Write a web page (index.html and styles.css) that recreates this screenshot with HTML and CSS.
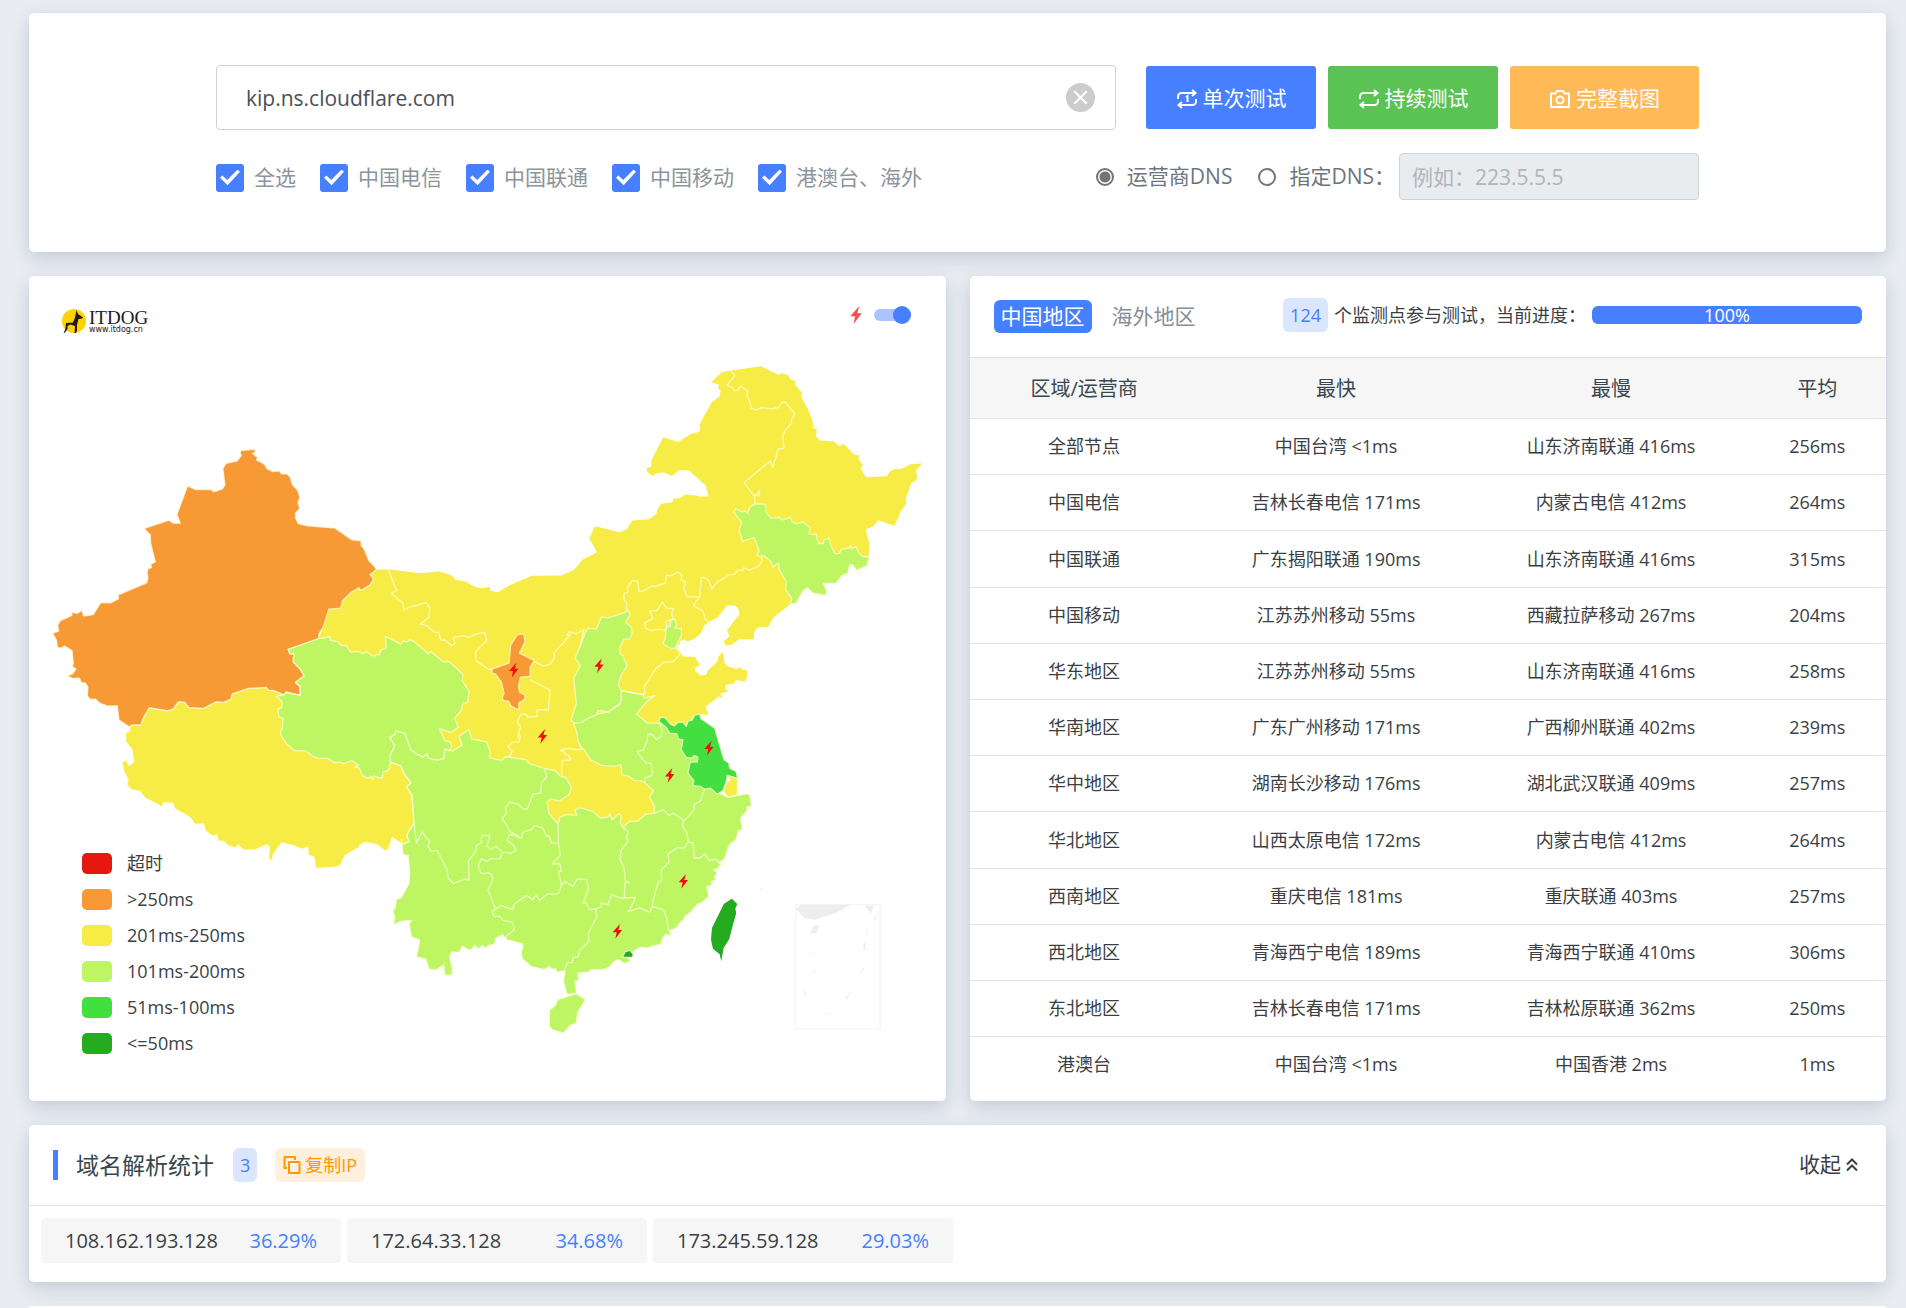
FILE: index.html
```html
<!DOCTYPE html>
<html lang="zh-CN">
<head>
<meta charset="utf-8">
<title>ITDOG</title>
<link rel="stylesheet" href="styles.css">
</head>
<body>
<svg class="defs" aria-hidden="true">
  <symbol id="bolt" viewBox="-14 -22 28 44"><path d="M8,-22 L-14,3 L-2,3 L-6,22 L14,-4 L3,-4 Z"/></symbol>
  <symbol id="repeat" viewBox="0 0 22 20"><path d="M2 10V7.500a3.500 3.500 0 0 1 3.500-3.500H19M16 1l3.500 3L16 7M20 10v2.500a3.500 3.500 0 0 1-3.500 3.500H3M6 13l-3.500 3L6 19"/></symbol>
</svg>

<section class="card query">
  <form class="query-form">
    <div class="row main-row">
      <div class="host">
        <input class="host-input" type="text" value="kip.ns.cloudflare.com" aria-label="域名">
        <button class="clear" type="button" aria-label="清除">
          <svg viewBox="0 0 28 28"><circle cx="14" cy="14" r="14" fill="#ccc"/><path d="M8 8l12 12M20 8L8 20" stroke="#fff" stroke-width="2" fill="none"/></svg>
        </button>
      </div>
      <div class="actions">
        <button class="btn blue" type="button"><svg class="ico" viewBox="0 0 22 20"><use href="#repeat"/><path d="M10 8l1.500-1v6"/></svg>单次测试</button>
        <button class="btn green" type="button"><svg class="ico" viewBox="0 0 22 20"><use href="#repeat"/></svg>持续测试</button>
        <button class="btn orange" type="button"><svg class="ico" viewBox="0 0 22 20"><path d="M2 4.500h4.500L8 2h6l1.500 2.500H20V18H2z"/><circle cx="11" cy="11" r="3.500"/></svg>完整截图</button>
      </div>
    </div>
    <div class="row option-row">
      <div class="checks">
        <label><input type="checkbox" checked>全选</label>
        <label><input type="checkbox" checked>中国电信</label>
        <label><input type="checkbox" checked>中国联通</label>
        <label><input type="checkbox" checked>中国移动</label>
        <label><input type="checkbox" checked>港澳台、海外</label>
      </div>
      <div class="dns">
        <label><input type="radio" name="dns" checked>运营商DNS</label>
        <label><input type="radio" name="dns">指定DNS：</label>
        <input class="dns-input" type="text" placeholder="例如：223.5.5.5" aria-label="DNS" disabled>
      </div>
    </div>
  </form>
</section>

<div class="columns">
  <section class="card map-card">
    <svg class="map" viewBox="87 828 2751 2475" role="img" aria-label="中国地图">
      <g class="areas">
        <g transform="translate(1200,1020)">
          <path class="y" d="M-71,690 -35,688 60,700 118,695 155,706 167,720 197,725 225,741 246,745 271,741 272,753 295,757 328,737 396,708 485,707 523,690 549,659 592,637 569,597 583,563 590,560 660,578 700,600 700,1400 100,1260 60,1150 -250,1000 -243,896 -230,862 -213,808 -178,805 -172,783 -149,760 -122,743 -118,752 -89,735 -79,718 -89,704Z"/>
        </g>
        <g transform="translate(1920,1020)">
          <path class="y" d="M-124,562 -60,578 -37,566 -22,542 28,538 49,523 54,507 64,492 98,487 102,476 118,475 139,464 162,467 165,465 180,470 207,470 198,437 148,392 119,390 97,408 74,398 50,400 38,408 22,395 21,384 35,380 35,361 71,292 116,306 150,284 180,275 183,262 178,258 191,232 217,186 240,170 243,152 235,145 238,133 228,131 214,128 246,97 274,92 365,79 418,105 427,99 446,106 452,117 468,124 467,134 480,150 487,158 484,170 504,205 518,240 522,265 532,267 529,288 541,302 583,304 598,318 613,312 645,345 661,346 656,356 670,376 663,386 679,411 743,409 748,397 765,387 785,387 812,373 848,371 829,392 834,412 829,422 815,430 799,475 801,490 783,516 778,530 765,558 716,541 703,558 679,570 690,615 687,650 600,650 452,793 402,832 386,861 354,862 343,877 343,898 298,899 277,915 258,917 252,905 270,889 262,871 299,824 296,805 285,797 262,797 235,832 207,847 193,858 186,878 165,897 145,904 125,899 118,915 110,920 131,950 165,951 181,975 167,985 167,993 182,1007 199,1006 204,992 233,967 236,951 250,935 254,968 265,980 291,988 302,982 306,990 323,991 321,1016 315,1025 288,1021 284,1031 258,1036 257,1048 266,1055 242,1061 250,1078 238,1070 198,1101 207,1126 180,1123 163,1130 136,1160 60,1160 -124,1160Z"/>
          <path class="g s" d="M283,517 289,506 308,517 314,513 325,520 330,503 346,492 377,493 380,518 395,535 420,533 426,540 452,533 457,545 470,552 490,547 511,562 509,583 530,584 536,611 551,611 554,600 568,594 574,618 587,642 600,640 605,629 630,624 632,617 636,626 650,620 655,635 670,651 690,650 682,678 650,692 660,698 658,705 640,675 630,675 625,701 608,706 590,730 552,731 562,755 557,767 518,759 504,744 491,752 470,790 453,793 456,775 438,750 440,725 418,688 418,671 411,672 400,683 392,662 372,648 352,648 359,632 343,593 309,604 299,570 306,547Z"/>
        </g>
        <g transform="translate(300,2040)">
          <path class="y s" d="M89,142 95,136 124,135 128,118 148,84 203,93 220,87 236,66 255,68 266,83 311,86 348,66 371,68 393,58 397,42 445,26 499,23 506,31 524,33 553,45 600,100 870,247 903,258 915,284 934,310 921,322 937,347 943,432 930,450 921,468 929,486 908,494 902,490 878,473 866,508 856,515 833,495 797,488 780,496 778,503 736,527 721,557 710,562 648,566 643,532 626,526 624,503 604,508 583,498 546,490 535,503 520,524 516,544 507,538 509,501 501,495 467,510 432,511 414,495 409,505 392,499 388,501 372,485 354,484 352,466 338,469 317,454 311,432 285,434 271,413 224,387 220,371 191,369 185,384 178,376 136,355 121,336 92,328 81,315 84,298 72,276 66,248 79,240 87,258 102,246 96,209 77,184 78,158 89,155Z"/>
        </g>
        <path class="o s" transform="translate(90,840)" d="M632,512 675,508 677,516 668,521 683,532 680,540 704,553 711,566 729,575 748,573 755,582 771,582 781,592 788,615 804,632 810,653 804,668 810,686 797,699 797,714 805,731 833,738 916,745 966,780 994,783 994,797 1002,806 1017,842 1036,862 1039,870 1021,884 1031,898 1021,915 992,932 988,923 961,940 938,963 932,985 897,988 880,1042 867,1063 867,1078 775,1109 781,1123 792,1121 790,1146 811,1168 823,1188 797,1208 811,1221 811,1247 769,1236 763,1245 734,1233 716,1231 709,1223 655,1226 607,1242 603,1258 581,1268 558,1266 521,1286 476,1283 465,1268 446,1266 430,1287 413,1293 358,1284 338,1318 334,1335 305,1336 299,1342 267,1321 262,1278 233,1279 209,1270 196,1258 182,1259 172,1249 174,1222 166,1210 153,1208 149,1195 127,1196 111,1187 127,1183 138,1168 127,1160 130,1152 126,1112 104,1099 92,1105 82,1103 80,1083 68,1060 86,1054 83,1036 90,1023 126,1007 125,997 142,1001 155,991 161,1009 190,1004 212,969 242,969 265,957 265,945 350,909 354,895 351,877 355,866 365,863 362,853 376,846 362,790 361,765 342,746 417,721 430,730 451,730 441,704 473,618 497,629 544,629 551,636 577,627 585,615 579,566 589,550 622,543 634,527 631,520Z"/>
        <path class="g s" transform="translate(300,2040)" d="M565,-91 657,-124 691,-129 691,-118 715,-114 723,-103 740,-103 752,-83 774,-85 788,-79 800,-84 822,-69 830,-76 840,-75 842,-88 859,-96 857,-130 903,-107 911,-117 921,-113 931,-120 944,-114 985,-78 993,-85 1030,-54 1048,-54 1065,-40 1090,-15 1087,2 1108,35 1103,68 1088,72 1086,90 1065,115 1076,143 1053,158 1018,146 1036,183 1052,187 1055,204 1047,213 1035,208 1033,236 1012,242 985,235 981,222 971,233 950,222 933,210 915,161 889,154 885,166 870,172 885,198 870,230 872,247 866,273 849,277 848,294 835,294 822,288 818,300 813,290 804,295 788,288 778,264 764,262 776,256 755,242 733,252 720,247 705,249 684,236 655,235 638,229 617,213 585,213 560,192 541,163 548,145 549,115 538,113 534,88 546,83 546,65 530,50 553,45 557,38 601,47 601,20 587,8 613,-12 601,-32 580,-54 582,-79 571,-77Z"/>
        <g transform="translate(1380,2040)">
          <path class="g s" d="M-210,230 -195,198 -210,172 -195,166 -191,154 -165,161 -147,210 -130,222 -109,233 -99,222 -95,235 -68,242 -47,236 -45,208 -33,213 -20,213 7,196 -2,170 27,149 36,178 80,186 90,212 90,235 125,242 140,230 160,234 200,240 210,252 253,266 288,273 302,290 370,300 367,208 355,185 352,160 342,130 360,128 400,105 445,97 480,75 484,33 551,45 553,56 585,48 565,62 553,75 530,103 563,130 598,130 660,165 740,240 780,340 805,352 866,342 872,350 875,380 862,381 862,393 843,415 848,450 836,453 830,480 813,491 805,505 795,538 779,548 788,557 777,560 779,566 761,570 773,580 765,592 770,602 756,605 755,619 741,620 748,650 728,668 712,675 693,698 676,710 673,718 660,731 650,745 632,752 636,769 618,764 608,778 603,794 576,800 565,805 540,803 521,816 505,836 515,842 495,852 475,840 460,848 450,862 430,870 393,870 388,877 355,880 357,903 346,905 350,940 322,945 311,905 316,880 314,873 291,878 292,905 289,868 276,868 268,861 255,870 215,861 203,850 188,838 184,820 190,798 187,792 140,780 128,765 108,776 104,793 84,798 77,808 69,797 55,808 45,797 32,813 8,800 -2,818 -24,817 -31,832 -22,865 -23,887 -45,887 -48,856 -72,871 -93,869 -102,838 -130,832 -120,781 -145,772 -152,733 -145,722 -175,725 -200,735 -195,715 -201,692 -194,685 -190,658 -177,655 -165,635 -152,610 -150,580 -155,527 -170,525 -175,480 -172,494 -151,486 -159,468 -150,450 -137,432 -143,347 -159,322 -146,310 -165,284 -177,258 -208,247Z"/>
          <path class="y s" d="M302,213 320,206 360,210 370,206 393,240 425,257 465,260 484,254 487,285 508,290 525,302 545,303 556,310 581,332 570,352 585,380 583,401 558,404 535,424 510,425 490,443 482,430 484,408 477,402 457,420 450,402 447,412 421,415 400,395 360,384 345,392 352,407 318,405 300,413 295,433 267,400 262,366 275,358 298,364 328,345 335,322 318,293 306,290 306,243 333,240 330,230 315,222 312,213Z"/>
          <path class="dg s" d="M598,125 601,114 615,113 633,134 644,138 655,128 670,127 680,140 685,124 697,121 705,106 720,103 724,117 765,145 793,240 808,250 810,265 830,276 834,297 803,287 800,305 790,333 772,343 752,325 735,328 722,320 700,318 703,303 685,280 692,247 713,247 715,232 703,227 697,235 680,233 665,210 670,180 657,178 651,162 630,160 620,143Z"/>
          <path class="y s" d="M803,287 834,297 833,346 805,352 792,335 800,310 812,300Z"/>
          <path class="g s" d="M350,942 377,960 354,998 350,1030 330,1038 312,1061 276,1050 269,1040 269,992 287,977 294,960Z"/>
          <path class="vg" d="M817,657 833,673 827,687 830,700 820,735 809,778 792,805 785,845 780,824 760,807 754,780 757,745 793,672Z"/>
          <path class="vg s" d="M489,833 496,817 511,812 521,825 518,833Z"/>
        </g>
        <g transform="translate(1200,1020)">
          <path class="g s" d="M526,1150 514,1143 530,1090 522,1015 542,977 526,955 541,920 557,878 565,865 590,868 605,832 625,834 655,825 680,816 680,806 692,823 678,847 695,862 697,880 691,897 672,899 660,925 660,940 670,948 682,978 665,1005 655,1035 665,1050 663,1090 625,1116 595,1112 590,1125 570,1133 545,1148Z"/>
          <path class="g s" d="M800,860 812,860 813,842 826,837 831,855 826,865 845,866 845,888 826,925 813,926 790,912 797,897Z"/>
          <path class="o s" d="M353,885 371,882 376,905 359,940 403,962 391,983 391,1010 362,1012 356,1040 360,1058 375,1065 376,1078 357,1090 357,1110 335,1100 326,1084 310,1082 308,1072 313,1060 305,1027 288,1003 277,1000 277,988 328,970 333,915Z"/>
        </g>
      </g>
      <g class="borders">
        <path transform="translate(1200,1020)" d="M-35,688 -10,752 -25,761 10,790 12,810 35,800 50,797 80,788 90,805 88,832 62,853 82,857 104,877 117,878 123,900 139,902 155,918 166,910 160,893 187,888 210,893 225,883 255,878 261,902 228,935 228,962 265,988 277,988M403,965 432,979 451,973 464,955 464,938 512,885 500,886 510,876 530,882 553,868 541,920M391,1020 451,1051 446,1110 412,1110 412,1130 385,1132 378,1122 362,1125 352,1148 362,1160 355,1195M680,806 682,790 673,780 673,762 685,757 683,743 698,722 714,724 718,754 730,754 757,738 765,740 797,730 800,707 815,707 835,696 847,707 845,720 858,727 852,747 863,771 897,771M735,850 760,835 750,814 772,812 788,787 800,805 822,806 816,820 820,837 797,847 802,860 797,872 778,868 755,873 738,865ZM662,1052 725,1064 736,1060 733,1042 770,985 795,967 820,966 842,943 830,925"/>
        <path transform="translate(1920,1020)" d="M180,771 185,715 190,712 206,720 217,747 232,727 270,705 285,703 295,690 310,692 312,684 330,690 355,680 365,668 367,652M180,771 161,797 190,814 197,838 207,847M274,92 286,107 262,136 278,142 285,152 295,151 303,138 325,153 322,163 336,205 352,210 365,203 397,207 418,202 427,187 437,187 466,222 456,238 456,250 436,272 430,290 433,325 415,328 400,383 392,363 314,428 341,465 360,468 360,452 345,470 346,492"/>
        <path transform="translate(1380,2040)" d="M175,160 182,170 178,187 157,187 145,200 157,215 150,230 132,233M598,130 607,150 605,170 590,180 580,165 565,162 562,185 550,212 532,215 548,238 560,250 575,250 577,287 556,295 556,310M735,328 722,365 704,373 703,392 672,424 663,414 640,400 628,408 612,390 583,401M672,424 668,437 682,460 686,487 700,490 705,535 722,535 735,523 748,543 768,538 785,555M686,487 672,506 655,503 625,522 628,548 605,570 606,600 595,610 580,662 577,685 571,698M490,443 505,455 500,475 506,483 484,512 481,540 492,560 498,605 510,608 496,609 494,655M410,688 424,682 425,670 445,675 455,645 480,655 494,655 528,653 512,687 505,696 540,685 571,698 577,680 610,690 622,715 625,745 632,765M410,688 408,700 412,710 385,763 388,785 360,812 355,832 340,833 338,848 322,850 314,873M410,688 390,690 378,668 370,672 387,625 380,600 352,598 340,620 315,605 305,618M295,433 296,490 302,527 277,553 300,552 305,575 297,575 305,618 297,640 285,645 265,642 240,662 228,647 220,660 200,648 164,673 158,690 125,677 97,695 107,688 85,632 100,595 90,580 65,582 55,560 65,537 80,545 95,537 122,537 127,518 155,520 170,512 160,495 142,482 150,463 185,475 190,457 215,450 225,437 250,445 260,470 268,468 275,490 290,490M253,266 262,290 245,310 243,340 220,343 203,388 190,388 175,373 150,367 137,385 140,400 127,417 140,435 150,455 178,470M-137,432 -130,490 -113,457 -90,487 -95,500 -85,515 -68,512 -37,573 -35,595 -18,612 15,598 28,602 26,543 48,515 50,498 64,490 66,467 90,468 82,500 92,508 110,500 127,518M97,695 102,710 120,710 130,722 160,728 163,750 140,770 138,780"/>
      </g>
      <g transform="translate(1380,2040)" fill="#eee">
        <path d="M1008,675H1262V1047H1008Z" fill="none" stroke="#f5f5f5" stroke-width="4"/>
        <path d="M1008,688 1025,675 1172,675 1130,700 1067,720 1035,716ZM1216,678H1242L1234,702ZM1060,740 1080,736 1070,760 1052,762ZM1257,695 1242,722 1247,722ZM1233,738 1216,764 1220,764ZM1212,790H1218V812H1212ZM1217,857 1202,878 1210,876ZM1054,802 1064,830 1060,828ZM1075,866 1055,888 1068,870ZM1030,934 1037,936 1042,956ZM1182,924 1157,958 1163,958ZM1095,1007 1128,995 1115,1002ZM900,630 910,622 908,630Z"/>
      </g>
      <g class="bolts">
        <use href="#bolt" x="1528" y="1989" width="28" height="44"/>
        <use href="#bolt" x="1784" y="1976" width="28" height="44"/>
        <use href="#bolt" x="1614" y="2188" width="28" height="44"/>
        <use href="#bolt" x="2114" y="2223" width="28" height="44"/>
        <use href="#bolt" x="1996" y="2305" width="28" height="44"/>
        <use href="#bolt" x="2037" y="2623" width="28" height="44"/>
        <use href="#bolt" x="1839" y="2773" width="28" height="44"/>
      </g>
    </svg>
    <div class="logo">
      <svg viewBox="0 0 24 25"><circle cx="12" cy="12" r="12" fill="#fcd305"/><path d="M14.500 1l1.500 4 5 3.500-1 1-3.500 0.500-1 4-0.500 2 0 5.500-1 2.500h-1.500l0.500-7-4.500-1.500-3 1.500 0 3-2.500 3.500-1.500 1 2-5 0.500-5.500 7-0.500 2-5z" fill="#231815"/></svg>
      <div class="logo-text"><span class="logo-name">ITDOG</span><span class="logo-url">www.itdog.cn</span></div>
    </div>
    <label class="quick"><svg viewBox="-14 -22 28 44"><use href="#bolt" x="-14" y="-22" width="28" height="44"/></svg><input type="checkbox" role="switch" aria-label="闪电显示" checked></label>
    <ul class="legend">
      <li><i class="sw timeout"></i>超时</li>
      <li><i class="sw slow"></i>&gt;250ms</li>
      <li><i class="sw mid"></i>201ms-250ms</li>
      <li><i class="sw ok"></i>101ms-200ms</li>
      <li><i class="sw good"></i>51ms-100ms</li>
      <li><i class="sw best"></i>&lt;=50ms</li>
    </ul>
  </section>

  <section class="card result">
    <div class="result-head">
      <nav class="tabs"><a class="tab active" href="#china">中国地区</a><a class="tab" href="#overseas">海外地区</a></nav>
      <div class="progress-info">
        <span class="badge count">124</span>
        <span class="progress-label">个监测点参与测试，当前进度：</span>
        <div class="progress">100%</div>
      </div>
    </div>
    <table>
      <thead><tr><th>区域/运营商</th><th>最快</th><th>最慢</th><th>平均</th></tr></thead>
      <tbody>
        <tr><td>全部节点</td><td>中国台湾 &lt;1ms</td><td>山东济南联通 416ms</td><td>256ms</td></tr>
        <tr><td>中国电信</td><td>吉林长春电信 171ms</td><td>内蒙古电信 412ms</td><td>264ms</td></tr>
        <tr><td>中国联通</td><td>广东揭阳联通 190ms</td><td>山东济南联通 416ms</td><td>315ms</td></tr>
        <tr><td>中国移动</td><td>江苏苏州移动 55ms</td><td>西藏拉萨移动 267ms</td><td>204ms</td></tr>
        <tr><td>华东地区</td><td>江苏苏州移动 55ms</td><td>山东济南联通 416ms</td><td>258ms</td></tr>
        <tr><td>华南地区</td><td>广东广州移动 171ms</td><td>广西柳州联通 402ms</td><td>239ms</td></tr>
        <tr><td>华中地区</td><td>湖南长沙移动 176ms</td><td>湖北武汉联通 409ms</td><td>257ms</td></tr>
        <tr><td>华北地区</td><td>山西太原电信 172ms</td><td>内蒙古电信 412ms</td><td>264ms</td></tr>
        <tr><td>西南地区</td><td>重庆电信 181ms</td><td>重庆联通 403ms</td><td>257ms</td></tr>
        <tr><td>西北地区</td><td>青海西宁电信 189ms</td><td>青海西宁联通 410ms</td><td>306ms</td></tr>
        <tr><td>东北地区</td><td>吉林长春电信 171ms</td><td>吉林松原联通 362ms</td><td>250ms</td></tr>
        <tr><td>港澳台</td><td>中国台湾 &lt;1ms</td><td>中国香港 2ms</td><td>1ms</td></tr>
      </tbody>
    </table>
  </section>
</div>

<section class="card stats">
  <header class="stats-head">
    <h2>域名解析统计</h2>
    <span class="badge">3</span>
    <button class="copy" type="button"><svg viewBox="0 0 18 18"><path d="M4 12H1.500V1H12v3M6 6h10.500v11H6z"/></svg>复制IP</button>
    <button class="collapse" type="button">收起<svg viewBox="0 0 12 14"><path d="M1 6.500l5-5 5 5M1 12.500l5-5 5 5"/></svg></button>
  </header>
  <ul class="ips">
    <li><span>108.162.193.128</span><span class="pct">36.29%</span></li>
    <li><span>172.64.33.128</span><span class="pct">34.68%</span></li>
    <li><span>173.245.59.128</span><span class="pct">29.03%</span></li>
  </ul>
</section>

<section class="card next"></section>
</body>
</html>
```
FILE: styles.css
```css
* {
  box-sizing: border-box;
}

body {
  margin: 0;
  min-height: 100vh;
  padding: 13px 20px 0 29px;
  display: flex;
  flex-direction: column;
  gap: 24px;
  background: #e9edf2;
  color: #3b3f44;
  font-family: "Open Sans", "Noto Sans CJK SC", sans-serif;
  font-size: 18px;
  line-height: 27px;
}

button,
input {
  font: inherit;
  color: inherit;
}

button {
  border: 0;
  padding: 0;
  background: none;
  cursor: pointer;
}

ul {
  list-style: none;
  margin: 0;
  padding: 0;
}

.defs {
  display: none;
}

.card {
  background: #fff;
  border-radius: 5px;
  box-shadow: 0 6px 18px rgba(60, 80, 110, 0.22);
}

/* query form */
.query {
  padding: 52px 0;
}

.query-form {
  width: 80%;
  max-width: 1483px;
  margin: 0 auto;
  display: flex;
  flex-direction: column;
  gap: 23px;
}

.row {
  display: flex;
  align-items: center;
}

.main-row {
  gap: 30px;
}

.host {
  flex: 1;
  display: flex;
  align-items: center;
  height: 65px;
  padding: 0 20px 0 29px;
  border: 1px solid #ced1d6;
  border-radius: 4px;
}

.host-input {
  flex: 1;
  min-width: 0;
  border: 0;
  padding: 2px 0 0;
  outline: 0;
  color: #495057;
  font-size: 21px;
}

.clear,
.clear svg {
  display: block;
  width: 29px;
  height: 29px;
}

.actions {
  display: flex;
  gap: 12px;
}

.btn {
  display: flex;
  align-items: center;
  justify-content: center;
  gap: 5px;
  width: 170px;
  height: 63px;
  padding-top: 2px;
  border-radius: 3px;
  color: #fff;
  font-size: 21px;
}

.blue {
  background: #467fff;
}

.green {
  background: #5ac353;
}

.orange {
  width: 189px;
  background: #ffb957;
}

.ico {
  width: 22px;
  height: 20px;
  fill: none;
  stroke: #fff;
  stroke-width: 2;
}

.option-row {
  justify-content: space-between;
  height: 47px;
  font-size: 21px;
}

.checks,
.dns {
  display: flex;
  align-items: center;
}

.checks {
  gap: 24px;
  padding-top: 2px;
  color: #8b949d;
}

.checks label,
.dns label {
  display: flex;
  align-items: center;
  gap: 10px;
}

.checks input {
  appearance: none;
  display: grid;
  place-items: center;
  width: 28px;
  height: 28px;
  margin: 0;
  border-radius: 3px;
  background: #467fff;
}

.checks input::before {
  content: "";
  width: 20px;
  height: 16px;
  background: #fff;
  clip-path: polygon(0 52%, 12% 38%, 36% 66%, 88% 0, 100% 14%, 38% 98%);
}

.dns {
  gap: 16px;
  color: #6c757d;
}

.dns label {
  gap: 13px;
}

.dns label:first-child {
  margin-right: 10px;
}

.dns input[type="radio"] {
  appearance: none;
  width: 18px;
  height: 18px;
  margin: 0;
  border: 2px solid #757575;
  border-radius: 50%;
}

.dns input[type="radio"]:checked {
  background: radial-gradient(#757575 5px, #fff 6px);
}

.dns-input {
  width: 300px;
  height: 47px;
  margin-left: -12px;
  padding: 0 12px;
  border: 1px solid #ced4da;
  border-radius: 4px;
  background: #e9ecef;
}

.dns-input::placeholder {
  color: #aeb5bc;
}

/* two main columns */
.columns {
  display: grid;
  grid-template-columns: 1fr 1fr;
  gap: 24px;
}

.map-card {
  position: relative;
}

.map {
  display: block;
  width: 100%;
}

.areas .y {
  fill: #f6ec45;
}

.areas .g {
  fill: #bdf662;
}

.areas .o {
  fill: #f79935;
}

.areas .dg {
  fill: #43de3f;
}

.areas .vg {
  fill: #25ab20;
}

.areas .s,
.borders path {
  stroke: rgba(255, 255, 225, 0.7);
  stroke-width: 4;
  stroke-linejoin: round;
}

.borders path {
  fill: none;
}

.bolts {
  fill: #f00f0f;
}

.logo {
  position: absolute;
  top: 33px;
  left: 33px;
  display: flex;
  align-items: center;
  gap: 3px;
}

.logo svg {
  width: 24px;
  height: 25px;
}

.logo-text {
  display: flex;
  flex-direction: column;
  color: #231815;
}

.logo-name {
  font: 19px/16px "Liberation Serif", serif;
}

.logo-url {
  font: 8px/8px "DejaVu Sans", sans-serif;
}

.quick {
  position: absolute;
  top: 30px;
  right: 35px;
  display: flex;
  align-items: center;
  gap: 12px;
}

.quick svg {
  width: 12px;
  height: 18px;
  fill: #ff4d4d;
}

.quick input {
  appearance: none;
  display: flex;
  align-items: center;
  justify-content: flex-end;
  width: 37px;
  height: 12px;
  margin: 0;
  border-radius: 6px;
  background: #a9c4ff;
}

.quick input::before {
  content: "";
  width: 18px;
  height: 18px;
  flex: none;
  border-radius: 50%;
  background: #467fff;
}

.legend {
  position: absolute;
  bottom: 39px;
  left: 53px;
}

.legend li {
  display: flex;
  align-items: center;
  gap: 15px;
  height: 36px;
}

.sw {
  width: 30px;
  height: 21px;
  border-radius: 5px;
}

.timeout {
  background: #e61610;
}

.slow {
  background: #f79935;
}

.mid {
  background: #f6ec45;
}

.ok {
  background: #bdf662;
}

.good {
  background: #43de3f;
}

.best {
  background: #25ab20;
}

/* results */
.result {
  display: flex;
  flex-direction: column;
  padding-bottom: 8px;
}

.result-head {
  display: flex;
  align-items: flex-start;
  justify-content: space-between;
  height: 81px;
  padding: 22px 24px 0;
}

.tabs {
  display: flex;
  gap: 13px;
  padding-top: 2px;
}

.tab {
  padding: 0 7px;
  border-radius: 6px;
  color: #868e96;
  font-size: 21px;
  line-height: 33px;
  text-decoration: none;
}

.tab.active {
  background: #467fff;
  color: #fff;
}

.progress-info {
  display: flex;
  align-items: center;
  gap: 6px;
}

.badge {
  padding: 0 7px;
  border-radius: 6px;
  background: #dae5ff;
  color: #467fff;
  line-height: 34px;
}

.progress {
  width: 270px;
  border-radius: 6px;
  background: #467fff;
  color: #fff;
  line-height: 18px;
  text-align: center;
}

table {
  flex: 1;
  width: 100%;
  table-layout: fixed;
  border-collapse: collapse;
  text-align: center;
}

th {
  width: 30%;
  padding: 17px 0 16px;
  border-top: 1px solid #dee2e6;
  background: #f6f6f6;
  color: #37474f;
  font-size: 20px;
  font-weight: 400;
}

th:first-child {
  width: 25%;
}

th:last-child {
  width: 15%;
}

td {
  padding: 14px 0;
  border-top: 1px solid #dfe5ea;
}

/* resolved addresses */
.stats {
  padding-bottom: 19px;
}

.stats-head {
  display: flex;
  align-items: center;
  height: 81px;
  padding: 0 28px 0 24px;
  border-bottom: 1px solid #e1e3e5;
}

h2 {
  margin: 0 19px 0 0;
  padding-left: 18px;
  border-left: 5px solid #467fff;
  color: #37474f;
  font-size: 23px;
  font-weight: 400;
  line-height: 30px;
}

.copy {
  display: flex;
  align-items: center;
  gap: 4px;
  margin-left: 18px;
  padding: 0 8px;
  border-radius: 6px;
  background: #fff0dd;
  color: #ff9800;
  line-height: 34px;
}

.copy svg {
  width: 18px;
  height: 18px;
  fill: none;
  stroke: #ff9800;
  stroke-width: 2;
  stroke-linejoin: round;
}

.collapse {
  display: flex;
  align-items: center;
  gap: 5px;
  margin-left: auto;
  font-size: 21px;
}

.collapse svg {
  width: 12px;
  height: 14px;
  fill: none;
  stroke: #3b3f44;
  stroke-width: 2;
}

.ips {
  display: flex;
  flex-wrap: wrap;
  gap: 6px;
  padding: 12px 12px 0;
}

.ips li {
  display: flex;
  align-items: center;
  justify-content: space-between;
  width: 300px;
  height: 45px;
  padding: 0 24px;
  border-radius: 4px;
  background: #f6f6f6;
  font-size: 20px;
}

.pct {
  color: #467fff;
}

.next {
  flex: 1;
  border-radius: 5px 5px 0 0;
}
```
